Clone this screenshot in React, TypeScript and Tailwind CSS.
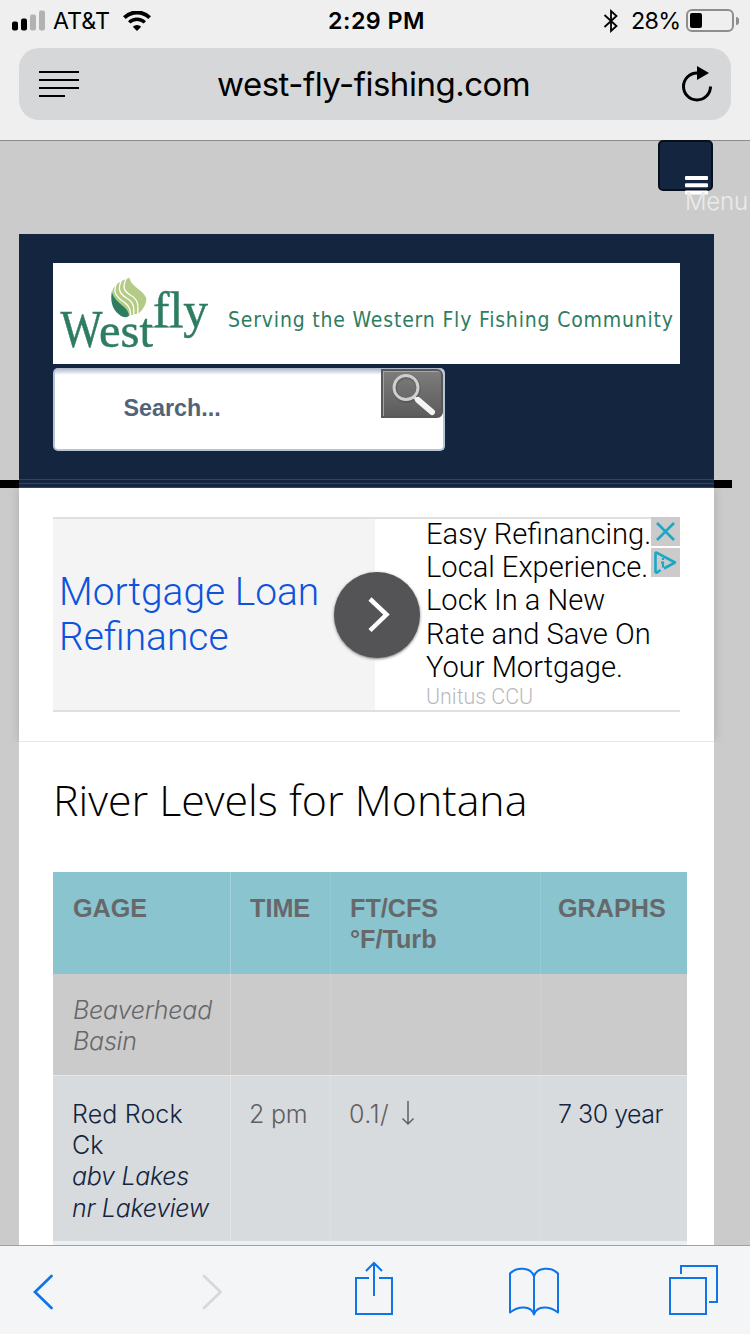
import { type ReactNode } from 'react';
import { clsx } from 'clsx';

const StatusBar = () => (
  <div className="flex h-10 items-center pt-px pl-3 text-[23.3px] leading-none text-black">
    <svg viewBox="0 0 34 22" className="h-[22px] w-[34px]">
      <rect x="0" y="11.500" width="6" height="9" rx="2" />
      <rect x="9" y="8.500" width="6" height="12" rx="2" />
      <rect x="18" y="4.500" width="6" height="16" rx="2" fill="#b2b2b3" />
      <rect x="27" y="0.500" width="6" height="20" rx="2" fill="#b2b2b3" />
    </svg>
    <span className="ml-[7px] w-[60px]">AT&amp;T</span>
    <svg viewBox="0 0 28 20" className="ml-[10px] h-5 w-7" fill="none" stroke="#000">
      <path d="M1.4 6.6a18 18 0 0 1 25.2 0" strokeWidth="4" />
      <path d="M6.2 11.4a11.2 11.2 0 0 1 15.6 0" strokeWidth="3.4" />
      <path d="M14 20 9.8 15.8a6 6 0 0 1 8.4 0Z" fill="#000" stroke="none" />
    </svg>
    <span className="ml-[177px] w-[99px] font-semibold tracking-[0.02em] whitespace-nowrap">
      2:29 PM
    </span>
    <svg
      viewBox="0 0 16 24"
      className="ml-[176px] h-6 w-4"
      fill="none"
      stroke="#000"
      strokeWidth="1.8"
      strokeLinejoin="miter"
    >
      <path d="M1.5 6 13.5 17 8 22V2l5.500 5L1.500 18" />
    </svg>
    <span className="ml-[12px] w-[55px] tracking-[-0.03em]">28%</span>
    <div className="flex h-[23px] w-12 items-center rounded-[6px] border-2 border-[#8e8e90] pl-[2px]">
      <div className="h-[15px] w-3 rounded-[2px] bg-black" />
    </div>
    <div className="ml-[2px] h-2 w-[3px] rounded-r-full bg-[#8e8e90]" />
  </div>
);

const AddressBar = () => (
  <div className="mx-[19px] mt-2 flex h-18 items-center rounded-[20px] bg-[#d6d7d9] text-black">
    <svg viewBox="0 0 40 28" className="ml-5 h-7 w-10">
      <path d="M0 2H40M0 10H40M0 18H40M0 26H26" stroke="#000" strokeWidth="2" />
    </svg>
    <span className="ml-[138px] w-[320px] text-[33px] leading-none tracking-[-0.015em] whitespace-nowrap">
      west-fly-fishing.com
    </span>
    <svg viewBox="0 0 32 36" className="ml-[144px] h-9 w-8">
      <path d="M29.500 20.500A13.500 13.500 0 1 1 16 7H18" fill="none" stroke="#000" strokeWidth="3" />
      <path d="M16 0V14L28 7Z" />
    </svg>
  </div>
);

const Logo = () => (
  <svg
    viewBox="53 263 627 101"
    className="h-[101px] w-[627px] bg-white font-['Liberation_Serif',serif]"
    fill="#2e7d60"
  >
    <path
      d="M129.300 277.700C132 288 143 289 146.300 298.300C146.500 305 143 309 139.300 313L129 316C125 306 111 300 112.500 290C114 286 118 281.500 129.300 277.700Z"
      fill="#b4cb85"
    />
    <g fill="none" stroke="#fff" strokeWidth="1.300">
      <path d="M127 277C121.500 288 124 291 131 295.500C138.500 300 138.500 305 137.500 316" />
      <path d="M122.500 278C117 289 119 293 126.500 298C134 302.500 134.500 307 133.500 317" />
      <path d="M118 280C113 290 114 294 121 300C128.500 305 131 308 130.500 317" />
    </g>
    <path d="M112 291C110 300 112 309 118.500 314C122.500 317.500 127 318.500 129 315.500C128.500 306 113.500 303 112 291Z" />
    <g stroke="#2e7d60" strokeWidth="0.500">
      <text y="347" fontSize="53">
        <tspan x="60.500" textLength="42" lengthAdjust="spacingAndGlyphs">W</tspan>
        <tspan x="99" fontSize="48" textLength="54" lengthAdjust="spacingAndGlyphs">est</tspan>
      </text>
      <text x="153" y="327" fontSize="51" textLength="55" lengthAdjust="spacingAndGlyphs">
        fly
      </text>
    </g>
    <path d="M147 327H183" stroke="#2e7d60" strokeWidth="1" />
    <text
      x="228"
      y="327"
      fontSize="21"
      textLength="445"
      className="font-['DejaVu_Sans_Condensed','DejaVu_Sans',sans-serif]"
    >
      Serving the Western Fly Fishing Community
    </text>
  </svg>
);

const SearchBox = () => (
  <div className="mt-1 flex h-[83px] w-[392px] items-start rounded-[5px] border-2 border-t-0 border-[#b9c5d6] bg-linear-to-b from-[#a9b5c7] to-white to-[7px]">
    <span className="ml-[68.500px] grow pt-[25px] font-['Liberation_Sans',sans-serif] text-[23.3px] leading-[30px] font-bold text-[#526377]">
      Search...
    </span>
    <div className="mt-px h-[49px] w-[62px] rounded-r-[6px] border-2 border-[#585858] bg-linear-to-b from-[#7d7d7d] to-[#5c5c5c] shadow-[inset_1px_1px_0_#a5a5a5]">
      <svg viewBox="0 0 58 45" className="h-[45px] w-[58px]" fill="none">
        <circle cx="23.500" cy="17.500" r="12" stroke="#444" strokeWidth="5" opacity=".35" />
        <circle cx="23" cy="16.500" r="12" stroke="#cfcfcf" strokeWidth="3" />
        <path d="m31 26 4 4" stroke="#ddd" strokeWidth="3" />
        <path d="m35 29 14 12" stroke="#f4f4f4" strokeWidth="6" strokeLinecap="round" />
      </svg>
    </div>
  </div>
);

const AdBadge = ({ children }: { children: ReactNode }) => (
  <svg
    viewBox="0 0 29 29"
    className="size-[29px] bg-[#cccacb]"
    fill="none"
    stroke="#17a9c5"
    strokeWidth="2.600"
  >
    {children}
  </svg>
);

const Ad = () => (
  <div className="relative flex h-[195px] w-[627px] border-y-2 border-[#e0e0e1] font-['Roboto',sans-serif] font-light">
    <div className="w-[322px] bg-[#f4f4f5] pt-[50px] pl-[6px] text-[38.900px] leading-[45px] text-[#0d53dc]">
      Mortgage Loan
      <br />
      Refinance
    </div>
    <div className="pl-[51px] text-[29.100px] leading-[33.200px] whitespace-nowrap text-black">
      <p className="-mt-px">
        Easy Refinancing.
        <br />
        Local Experience.
        <br />
        Lock In a New
        <br />
        Rate and Save On
        <br />
        Your Mortgage.
      </p>
      <p className="text-[21.4px] leading-[26px] text-[#b9b9bc]">Unitus CCU</p>
    </div>
    <svg
      viewBox="0 0 86 86"
      className="absolute top-[53px] left-[281px] size-[86px] rounded-full bg-[#545355] shadow-[0_1px_3px_#777]"
    >
      <path d="m36 27 16.500 15.500L36 58.500" fill="none" stroke="#fff" strokeWidth="4.500" />
    </svg>
    <div className="absolute -top-[2px] right-0 flex flex-col gap-[2px]">
      <AdBadge>
        <path d="m6 6 17 17M23 6 6 23" />
      </AdBadge>
      <AdBadge>
        <path
          d="M9.500 22 6 24.500Q4.500 25 4.500 23.500V5.500Q4.500 4 6 4.800L24 14.500 13 20.500"
          strokeLinejoin="round"
        />
        <path d="M12 10V12M10 14.500H12V19.500" strokeWidth="2.200" />
      </AdBadge>
    </div>
  </div>
);

type Cell = { text: ReactNode; className?: string };

const Row = ({ cells, className }: { cells: Cell[]; className: string }) => (
  <div className={clsx('grid grid-cols-[177px_100px_210px_147px]', className)}>
    {cells.map((cell, i) => (
      <div
        key={i}
        className={clsx(
          'pt-[21px] pl-5 whitespace-nowrap',
          i === 1 && 'border-l border-white/25',
          i > 1 && 'border-l border-white/10',
          cell.className,
        )}
      >
        {cell.text}
      </div>
    ))}
  </div>
);

const LevelsTable = () => (
  <div className="w-[634px] text-[25px] leading-[31.200px] font-light tracking-[-0.02em] text-[#66686a]">
    <Row
      className="h-[102px] bg-[#8ac4cf] font-['Liberation_Sans',sans-serif] text-[25.2px] font-bold tracking-normal"
      cells={[
        { text: 'GAGE' },
        { text: 'TIME', className: 'pl-[19px]' },
        { text: <>FT/CFS<br />°F/Turb</>, className: 'pl-[19px]' },
        { text: 'GRAPHS', className: 'pl-[17px]' },
      ]}
    />
    <Row
      className="h-[101px] bg-[#cbcbcb] tracking-[-0.008em] italic"
      cells={[{ text: <>Beaverhead<br />Basin</> }, { text: '' }, { text: '' }, { text: '' }]}
    />
    <Row
      className="h-[166px] border-t border-[#e6e8ea] bg-[#d8dbde] text-[#5f6062] [&>div]:pt-[23px]"
      cells={[
        {
          text: (
            <>
              Red Rock
              <br />
              Ck
              <br />
              <i className="tracking-[-0.012em]">
                abv Lakes
                <br />
                nr Lakeview
              </i>
            </>
          ),
          className: 'pl-[19px] tracking-[0.006em] text-[#14263f]',
        },
        { text: '2 pm', className: 'pl-[18px] tracking-[-0.01em]' },
        {
          text: (
            <span className="flex tracking-[0.02em]">
              0.1/
              <svg
                viewBox="0 0 14 26"
                className="mt-px ml-[12px] h-[26px] w-[14px]"
                fill="none"
                stroke="currentColor"
                strokeWidth="1.500"
              >
                <path d="M7 1v23M1.500 18.500 7 24l5.500-5.500" />
              </svg>
            </span>
          ),
          className: 'pl-[18px]',
        },
        { text: '7 30 year', className: 'pl-[17px] text-[#14263f]' },
      ]}
    />
    <div className="h-1 bg-[#ebf0f4]" />
  </div>
);

const Toolbar = () => (
  <div className="flex h-[89px] items-start border-t border-[#a0a2a4] bg-[#f4f5f7] pl-[33px]">
    <svg viewBox="0 0 20 36" className="mt-7 h-9 w-5" fill="none" stroke="#0f74e8" strokeWidth="2.700" strokeLinecap="round">
      <path d="M18.500 2 2 18l16.500 16" />
    </svg>
    <svg viewBox="0 0 20 36" className="mt-7 ml-[149px] h-9 w-5" fill="none" stroke="#d6d8da" strokeWidth="2.700" strokeLinecap="round">
      <path d="M2 2 18.500 18 2 34" />
    </svg>
    <svg viewBox="0 0 38 54" className="mt-[15px] ml-[133px] h-[54px] w-[38px]" fill="none" stroke="#0f74e8" strokeWidth="2">
      <path d="M14 17H1v36h36V17H24M19 2v33M11 10l8-8 8 8" />
    </svg>
    <svg viewBox="0 0 50 50" className="mt-[21px] ml-[116px] h-[50px] w-[50px]" fill="none" stroke="#0f74e8" strokeWidth="2" strokeLinejoin="round">
      <path d="M25 9.500C22-.500 7 0 1 6.500V45.500C9 39 22 38 25 47.500C28 38 41 39 49 45.500V6.500C43 0 28-.500 25 9.500ZM25 9V47.500" />
    </svg>
    <svg viewBox="0 0 50 50" className="mt-[19px] ml-[110px] h-[50px] w-[50px]" fill="none" stroke="#0f74e8" strokeWidth="2">
      <path d="M1 13h36v36H1ZM12 9V1H48v36h-8" />
    </svg>
  </div>
);

export default function App() {
  return (
    <div className="flex h-[1334px] w-[750px] flex-col overflow-hidden bg-[#cbcbcb] font-['Inter',sans-serif]">
      <header className="h-[141px] shrink-0 border-b border-[#8d8d8e] bg-[#efefef]">
        <StatusBar />
        <AddressBar />
      </header>

      <main className="relative h-[1104px] pt-[93px] pl-[19px]">
        {/* Menu button hangs off the top edge of the page */}
        <div className="absolute -top-px left-[658px] h-[51px] w-[55px] rounded-[5px] border-2 border-[#070f1b] bg-[#14263f]" />
        <div className="absolute top-[35px] left-[685px] w-[65px]">
          <svg viewBox="0 0 23 20" className="h-5 w-[23px]" fill="#fff">
            <rect y="0" width="23" height="4" rx="1" />
            <rect y="7.300" width="23" height="4" rx="1" />
            <rect y="14.600" width="23" height="4" rx="1" />
          </svg>
          <span className="-mt-[9px] block text-[24px] leading-[30px] font-light tracking-[-0.01em] text-[#ebebeb]">
            Menu
          </span>
        </div>
        {/* Rule that runs behind the page */}
        <div className="absolute top-[339px] left-0 h-2 w-[732px] bg-black" />

        <div className="relative w-[695px] bg-white">
          <div className="h-[254px] border-b border-[#33445c] bg-[#14263f] px-[34px] pt-[29px]">
            <Logo />
            <SearchBox />
            <div className="-mx-[34px] mt-7 h-[5px] border-y border-[#33445c]" />
          </div>
          <div className="h-[254px] border-b border-[#e8e8e9] px-[34px] pt-[29px] shadow-[0_0_10px_rgba(0,0,0,0.15)] [clip-path:inset(0_-20px_0_-20px)]">
            <Ad />
          </div>
          <div className="h-[503px] px-[34px]">
            <h1 className="h-[130px] pt-[29px] font-['Open_Sans',sans-serif] text-[42.900px] leading-[58px] font-light whitespace-nowrap text-black">
              River Levels for Montana
            </h1>
            <LevelsTable />
          </div>
        </div>
      </main>

      <Toolbar />
    </div>
  );
}
